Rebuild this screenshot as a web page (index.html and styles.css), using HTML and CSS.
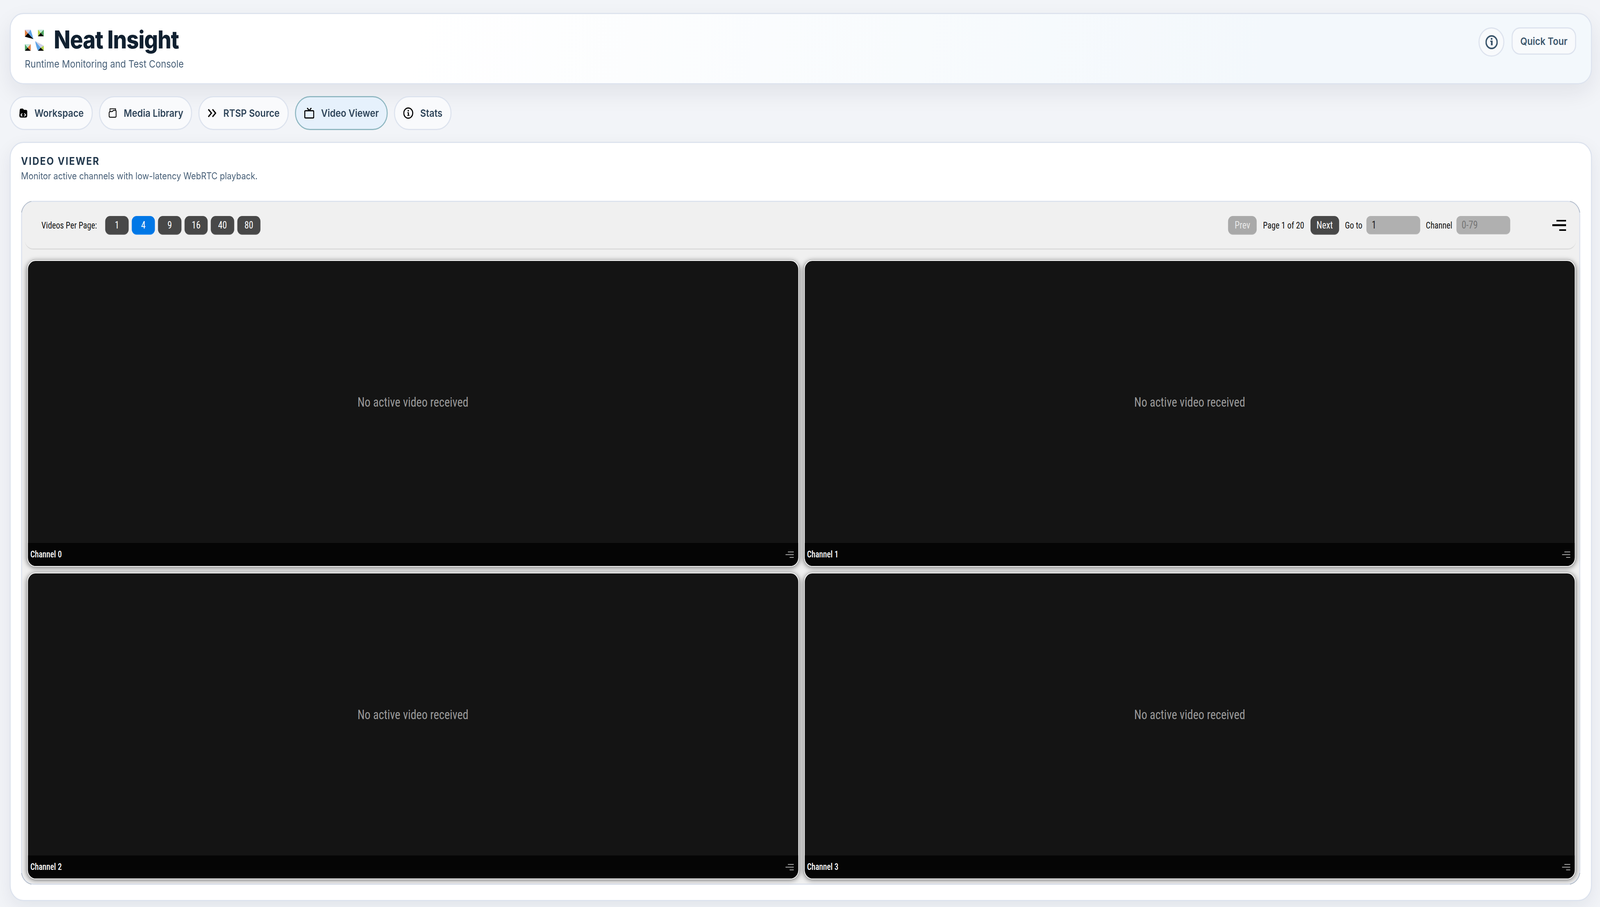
FILE: index.html
```html
<!DOCTYPE html>
<html lang="en">
<head>
  <meta charset="UTF-8">
  <title>Neat Insight</title>
  <link rel="stylesheet" href="styles.css">
</head>
<body>
  <div class="page">
    <header class="app-header">
      <div class="brand">
        <div class="brand-row">
          <svg class="logo" viewBox="0 0 55 55">
            <!-- top left -->
            <path d="M0 0H17L9 9Z" fill="#cfd0e6"/>
            <path d="M0 0L9 9L0 18Z" fill="#e07c3e"/>
            <path d="M17 0L25 24L9 9Z" fill="#5fa5e6"/>
            <path d="M0 18L9 9L25 24Z" fill="#050505"/>
            <!-- top right -->
            <path d="M38 0H55L46 8Z" fill="#c5e8dc"/>
            <path d="M38 0L46 8L38 17Z" fill="#b2d24a"/>
            <path d="M55 0V17L46 8Z" fill="#4aa35e"/>
            <path d="M38 17L46 8L55 17Z" fill="#050505"/>
            <!-- bottom left -->
            <path d="M0 37H17L8 46Z" fill="#c5e8dc"/>
            <path d="M0 37L8 46L0 54Z" fill="#4aa35e"/>
            <path d="M17 37V54L8 46Z" fill="#e07c3e"/>
            <path d="M0 54L8 46L17 54Z" fill="#050505"/>
            <!-- bottom right -->
            <path d="M30 29L55 41L46 46Z" fill="#cfd0e6"/>
            <path d="M30 29L46 46L38 54Q32 42 30 29Z" fill="#5fa5e6"/>
            <path d="M55 41V54L46 46Z" fill="#b2d24a"/>
            <path d="M38 54L46 46L55 54Z" fill="#050505"/>
          </svg>
          <h1 class="brand-title">Neat Insight</h1>
        </div>
        <p class="brand-sub">Runtime Monitoring and Test Console</p>
      </div>
      <div class="header-actions">
        <button class="round-btn" aria-label="Info">
          <svg viewBox="0 0 36 36" class="round-icon">
            <circle cx="18" cy="18" r="16" fill="none" stroke="#3b566c" stroke-width="4"/>
            <circle cx="18" cy="9.500" r="2.600" fill="#3b566c"/>
            <path d="M14 14H21V26H16V17H14Z" fill="#3b566c"/>
          </svg>
        </button>
        <button class="tour-btn">Quick Tour</button>
      </div>
    </header>

    <nav class="tabs">
      <button class="tab">
        <svg class="tab-icon" viewBox="0 0 24 24">
          <path d="M2 6Q2 1 6 1H11L14 4H19Q23 4 23 8V18Q23 23 18 23H6Q1 23 1 18Z" fill="#000"/>
          <path d="M9 13L5.500 16.500L9 20M15 13L18.500 16.500L15 20" fill="none" stroke="#fff" stroke-width="2.200"/>
        </svg>
        Workspace
      </button>
      <button class="tab">
        <svg class="tab-icon" viewBox="0 0 24 26">
          <path d="M4 9V1.500H21V6" fill="none" stroke="#000" stroke-width="2"/>
          <path d="M1.500 13Q1.500 9 5.500 9H10Q12 9 13 7Q14 5.500 16 5.500H20Q22.500 5.500 22.500 8V21Q22.500 24 19.500 24H4.500Q1.500 24 1.500 21Z" fill="none" stroke="#000" stroke-width="2.400"/>
        </svg>
        Media Library
      </button>
      <button class="tab">
        <svg class="tab-icon" viewBox="0 0 25 22">
          <path d="M2 1.500L11 11L2 20.500M14 1.500L23 11L14 20.500" fill="none" stroke="#000" stroke-width="3.400"/>
        </svg>
        RTSP Source
      </button>
      <button class="tab tab-active">
        <svg class="tab-icon tab-icon-wide" viewBox="0 0 29 28">
          <rect x="1.500" y="8" width="26" height="18.500" rx="2.500" fill="none" stroke="#000" stroke-width="3"/>
          <path d="M8.500 1L14.500 7.500L20.500 1" fill="none" stroke="#000" stroke-width="3"/>
        </svg>
        Video Viewer
      </button>
      <button class="tab">
        <svg class="tab-icon tab-icon-wide" viewBox="0 0 29 29">
          <circle cx="14.500" cy="14.500" r="13" fill="none" stroke="#000" stroke-width="3"/>
          <circle cx="14.500" cy="8.500" r="2" fill="#000"/>
          <path d="M11.500 12.500H16.500V19.500H18V21.500H11.500V19.500H13.500V14.500H11.500Z" fill="#000"/>
        </svg>
        Stats
      </button>
    </nav>

    <main class="card">
      <h2 class="card-title">VIDEO VIEWER</h2>
      <p class="card-sub">Monitor active channels with low-latency WebRTC playback.</p>

      <section class="viewer">
        <div class="toolbar">
          <div class="toolbar-group">
            <span class="tool-label per-page">Videos Per Page:</span>
            <div class="count-btns">
              <button class="btn count">1</button>
              <button class="btn count btn-blue">4</button>
              <button class="btn count">9</button>
              <button class="btn count">16</button>
              <button class="btn count">40</button>
              <button class="btn count">80</button>
            </div>
          </div>
          <div class="toolbar-group pager">
            <button class="btn pg btn-off">Prev</button>
            <span class="tool-label">Page 1 of 20</span>
            <button class="btn pg">Next</button>
            <span class="tool-label goto-label">Go to</span>
            <input class="field" type="text" value="1">
            <span class="tool-label chan-label">Channel</span>
            <input class="field" type="text" placeholder="0-79">
            <svg class="menu-icon" viewBox="0 0 40 28">
              <path d="M12 0H40V4H12ZM0 11H40V16H0ZM20 24H40V28H20Z" fill="#000"/>
            </svg>
          </div>
        </div>

        <div class="grid">
          <div class="tile">
            <div class="tile-video">No active video received</div>
            <div class="tile-foot">
              <span>Channel 0</span>
              <svg class="tile-icon" viewBox="0 0 24 16"><path d="M7 0H24V2H7ZM0 7H24V9H0ZM12 14H24V16H12Z" fill="#aaa"/></svg>
            </div>
          </div>
          <div class="tile">
            <div class="tile-video">No active video received</div>
            <div class="tile-foot">
              <span>Channel 1</span>
              <svg class="tile-icon" viewBox="0 0 24 16"><path d="M7 0H24V2H7ZM0 7H24V9H0ZM12 14H24V16H12Z" fill="#aaa"/></svg>
            </div>
          </div>
          <div class="tile">
            <div class="tile-video">No active video received</div>
            <div class="tile-foot">
              <span>Channel 2</span>
              <svg class="tile-icon" viewBox="0 0 24 16"><path d="M7 0H24V2H7ZM0 7H24V9H0ZM12 14H24V16H12Z" fill="#aaa"/></svg>
            </div>
          </div>
          <div class="tile">
            <div class="tile-video">No active video received</div>
            <div class="tile-foot">
              <span>Channel 3</span>
              <svg class="tile-icon" viewBox="0 0 24 16"><path d="M7 0H24V2H7ZM0 7H24V9H0ZM12 14H24V16H12Z" fill="#aaa"/></svg>
            </div>
          </div>
        </div>
      </section>
    </main>
  </div>
</body>
</html>
```

FILE: styles.css
```css
* {
  box-sizing: border-box;
}

html, body {
  height: 100%;
  overflow: hidden;
}

body {
  margin: 0;
  background-color: #f2f4f8;
  font-family: Inter, "Noto Sans", sans-serif;
}

.page {
  width: 4638px;
  height: 2322px;
  padding: 33px 23px 15px 28px;
  display: flex;
  flex-direction: column;
  transform-origin: 0 0;
}

/* The sandbox browser caps its window at 4096px wide instead of 4638px.
   Squeeze the 4638px design horizontally so it still fills the frame. */
@media (max-width: 4637px) {
  .page {
    transform: scaleX(0.8831);
  }
}

/* header */
.app-header {
  height: 183px;
  flex: none;
  display: flex;
  justify-content: space-between;
  padding: 31px 43px 0 41px;
  background: linear-gradient(100deg, #ffffff 0%, #ffffff 25%, #f3f8fc 80%);
  border: 3px solid #dde3ee;
  border-radius: 40px;
  box-shadow: 0 22px 60px rgba(20, 30, 50, 0.08);
}

.brand-row {
  display: flex;
  align-items: center;
  gap: 29px;
}

.logo {
  width: 55px;
  height: 55px;
  margin-top: 4px;
}

.brand-title {
  margin: 0;
  font-size: 63px;
  line-height: 68px;
  font-weight: 800;
  letter-spacing: -1.300px;
  color: #102030;
}

.brand-sub {
  margin: 12px 0 0;
  font-size: 26px;
  line-height: 34px;
  color: #486078;
}

.header-actions {
  display: flex;
  gap: 21px;
  align-items: flex-start;
  margin-top: 3px;
}

.round-btn {
  width: 75px;
  height: 75px;
  padding: 0;
  display: flex;
  align-items: center;
  justify-content: center;
  background: #f8fafc;
  border: 3px solid #dde3ee;
  border-radius: 50%;
}

.round-icon {
  width: 36px;
  height: 36px;
}

.tour-btn {
  width: 187px;
  height: 70px;
  padding: 0;
  background: #f8fafc;
  border: 3px solid #dde3ee;
  border-radius: 24px;
  font-family: inherit;
  font-size: 26px;
  font-weight: 600;
  color: #3b566c;
}

/* tabs */
.tabs {
  flex: none;
  display: flex;
  gap: 18px;
  margin-top: 30px;
}

.tab {
  height: 87px;
  padding: 0 23px 0 24px;
  display: flex;
  align-items: center;
  gap: 20px;
  background: #f9fafc;
  border: 3px solid #dde3ee;
  border-radius: 44px;
  font-family: inherit;
  font-size: 26px;
  font-weight: 600;
  color: #2d4358;
}

.tab-active {
  background: #e6f1fc;
  border-color: #90b8c2;
}

.tab-icon {
  width: 25px;
  height: 25px;
}

.tab-icon-wide {
  width: 29px;
  height: 29px;
}

/* main card */
.card {
  flex: 1;
  min-height: 0;
  margin-top: 30px;
  padding: 31px 31px 39px 30px;
  display: flex;
  flex-direction: column;
  background: #fff;
  border: 3px solid #dde3ee;
  border-radius: 40px;
  box-shadow: 0 16px 50px rgba(20, 30, 50, 0.07);
}

.card-title {
  margin: 0;
  font-size: 27px;
  line-height: 32px;
  font-weight: 700;
  letter-spacing: 2.600px;
  color: #23394d;
}

.card-sub {
  margin: 4px 0 0;
  font-size: 24px;
  line-height: 36px;
  color: #486078;
}

/* viewer panel */
.viewer {
  position: relative;
  flex: 1;
  min-height: 0;
  margin-top: 45px;
  padding: 0 11px 11px 15px;
  display: flex;
  flex-direction: column;
  background: #f0f0f0;
  border: 3px solid #dde3ee;
  border-radius: 36px;
}

/* thin dark arcs that show only on the panel corners */
.viewer::before {
  content: "";
  position: absolute;
  inset: -3px;
  border: 1px solid #6f7c8a;
  border-radius: 36px;
  pointer-events: none;
  -webkit-mask:
    linear-gradient(#000, #000) 0 0 / 30px 30px no-repeat,
    linear-gradient(#000, #000) 100% 0 / 30px 30px no-repeat,
    linear-gradient(#000, #000) 0 100% / 30px 30px no-repeat,
    linear-gradient(#000, #000) 100% 100% / 30px 30px no-repeat;
  mask:
    linear-gradient(#000, #000) 0 0 / 30px 30px no-repeat,
    linear-gradient(#000, #000) 100% 0 / 30px 30px no-repeat,
    linear-gradient(#000, #000) 0 100% / 30px 30px no-repeat,
    linear-gradient(#000, #000) 100% 100% / 30px 30px no-repeat;
}

.toolbar {
  flex: none;
  height: 122px;
  margin: 0 -2px 0 -7px;
  padding: 0 29px 0 48px;
  display: flex;
  align-items: center;
  justify-content: space-between;
  border-bottom: 3px solid #dcdcdc;
  border-radius: 0 0 24px 24px;
}

.toolbar-group {
  display: flex;
  align-items: center;
}

.tool-label {
  font-family: Roboto, sans-serif;
  font-stretch: 75%;
  font-size: 24px;
  color: #111;
}

.per-page {
  margin-right: 24px;
}

.count-btns {
  display: flex;
  gap: 9px;
}

.btn {
  height: 48px;
  padding: 0;
  background: #484848;
  border: 0;
  border-bottom: 2px solid #5e5e5e;
  border-radius: 14px;
  font-family: Roboto, sans-serif;
  font-stretch: 75%;
  font-size: 26px;
  color: #fff;
}

.count {
  width: 67.500px;
}

.btn-blue {
  background: #0077e6;
  border-bottom-color: #2a8ff0;
}

.pg {
  width: 83px;
}

.btn-off {
  background: #a9a9a9;
  border-bottom-color: #b5b5b5;
  color: #e8e8e8;
}

.pager .tool-label {
  margin: 0 18px;
}

.pager .goto-label {
  margin: 0 12px 0 17px;
}

.pager .chan-label {
  margin: 0 12px 0 16px;
}

.field {
  width: 156px;
  height: 47px;
  padding: 0 15px;
  background: #b0b0b0;
  border: 0;
  border-bottom: 2px solid #b8b8b8;
  border-radius: 12px;
  font-family: Roboto, sans-serif;
  font-stretch: 75%;
  font-size: 27px;
  color: #222;
}

.field::placeholder {
  color: #757575;
}

.menu-icon {
  width: 40px;
  height: 28px;
  margin-left: 122px;
}

/* video tiles */
.grid {
  flex: 1;
  min-height: 0;
  margin-top: 27px;
  display: grid;
  grid-template-columns: 1fr 1fr;
  grid-template-rows: 1fr 1fr;
  gap: 15px;
}

.tile {
  display: flex;
  flex-direction: column;
  overflow: hidden;
  background: #141414;
  border: 2px solid #fff;
  border-radius: 24px;
  box-shadow: 0 2px 14px rgba(0, 0, 0, 0.55);
}

.tile-video {
  flex: 1;
  display: flex;
  align-items: center;
  justify-content: center;
  font-family: Roboto, sans-serif;
  font-stretch: 75%;
  font-size: 33.500px;
  color: #9a9a9a;
}

.tile-foot {
  flex: none;
  height: 59px;
  padding: 0 13px 0 7px;
  display: flex;
  align-items: center;
  justify-content: space-between;
  background: #050505;
  font-family: Roboto, sans-serif;
  font-stretch: 75%;
  font-size: 23px;
  font-weight: 500;
  color: #fff;
}

.tile-icon {
  width: 24px;
  height: 16px;
}
```
